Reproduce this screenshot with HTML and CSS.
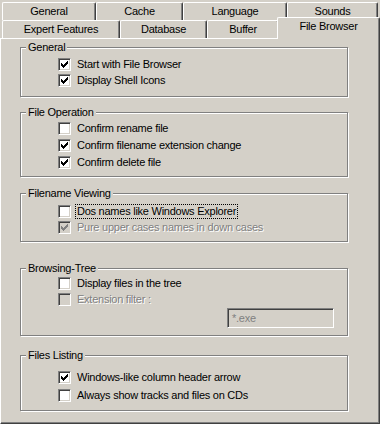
FILE: index.html
```html
<!DOCTYPE html>
<html>
<head>
<meta charset="utf-8">
<link rel="stylesheet" href="styles.css">
</head>
<body>
<div class="tabs">
  <div class="tabrow">
    <div class="tab w-general">General</div>
    <div class="tab w-cache">Cache</div>
    <div class="tab w-language">Language</div>
    <div class="tab w-sounds">Sounds</div>
  </div>
  <div class="tabrow">
    <div class="tab w-expert">Expert Features</div>
    <div class="tab w-database">Database</div>
    <div class="tab w-buffer">Buffer</div>
    <div class="tab tab-active w-filebrowser">File Browser</div>
  </div>
</div>
<div class="panel">
  <fieldset class="group g-general">
    <legend>General</legend>
    <div class="rows">
      <div class="row"><span class="cb"><svg width="11" height="11" viewBox="1 1 11 11"><path d="M3 5h1v3h-1z M4 6h1v3h-1z M5 7h1v3h-1z M6 6h1v3h-1z M7 5h1v3h-1z M8 4h1v3h-1z M9 3h1v3h-1z"/></svg></span><span class="lbl">Start with File Browser</span></div>
      <div class="row"><span class="cb"><svg width="11" height="11" viewBox="1 1 11 11"><path d="M3 5h1v3h-1z M4 6h1v3h-1z M5 7h1v3h-1z M6 6h1v3h-1z M7 5h1v3h-1z M8 4h1v3h-1z M9 3h1v3h-1z"/></svg></span><span class="lbl">Display Shell Icons</span></div>
    </div>
  </fieldset>
  <fieldset class="group g-fileop">
    <legend>File Operation</legend>
    <div class="rows">
      <div class="row"><span class="cb"></span><span class="lbl">Confirm rename file</span></div>
      <div class="row"><span class="cb"><svg width="11" height="11" viewBox="1 1 11 11"><path d="M3 5h1v3h-1z M4 6h1v3h-1z M5 7h1v3h-1z M6 6h1v3h-1z M7 5h1v3h-1z M8 4h1v3h-1z M9 3h1v3h-1z"/></svg></span><span class="lbl">Confirm filename extension change</span></div>
      <div class="row"><span class="cb"><svg width="11" height="11" viewBox="1 1 11 11"><path d="M3 5h1v3h-1z M4 6h1v3h-1z M5 7h1v3h-1z M6 6h1v3h-1z M7 5h1v3h-1z M8 4h1v3h-1z M9 3h1v3h-1z"/></svg></span><span class="lbl">Confirm delete file</span></div>
    </div>
  </fieldset>
  <fieldset class="group g-naming">
    <legend>Filename Viewing</legend>
    <div class="rows">
      <div class="row"><span class="cb"></span><span class="lbl lbl-focus">Dos names like Windows Explorer</span></div>
      <div class="row"><span class="cb cb-disabled"><svg width="11" height="11" viewBox="1 1 11 11"><path d="M3 5h1v3h-1z M4 6h1v3h-1z M5 7h1v3h-1z M6 6h1v3h-1z M7 5h1v3h-1z M8 4h1v3h-1z M9 3h1v3h-1z"/></svg></span><span class="lbl lbl-disabled">Pure upper cases names in down cases</span></div>
    </div>
  </fieldset>
  <fieldset class="group g-tree">
    <legend>Browsing-Tree</legend>
    <div class="rows">
      <div class="row"><span class="cb"></span><span class="lbl">Display files in the tree</span></div>
      <div class="row"><span class="cb cb-disabled"></span><span class="lbl lbl-disabled">Extension filter :</span></div>
      <div class="inputrow"><div class="textbox">*.exe</div></div>
    </div>
  </fieldset>
  <fieldset class="group g-listing">
    <legend>Files Listing</legend>
    <div class="rows">
      <div class="row row-tall"><span class="cb"><svg width="11" height="11" viewBox="1 1 11 11"><path d="M3 5h1v3h-1z M4 6h1v3h-1z M5 7h1v3h-1z M6 6h1v3h-1z M7 5h1v3h-1z M8 4h1v3h-1z M9 3h1v3h-1z"/></svg></span><span class="lbl">Windows-like column header arrow</span></div>
      <div class="row row-tall"><span class="cb"></span><span class="lbl">Always show tracks and files on CDs</span></div>
    </div>
  </fieldset>
</div>
</body>
</html>
```
FILE: styles.css
```css
html, body {
  margin: 0;
  padding: 0;
}
body {
  width: 380px;
  height: 424px;
  overflow: hidden;
  background: #d4d0c8;
  color: #000;
  font-family: "Liberation Sans", Arial, sans-serif;
  font-size: 11px;
  line-height: 13px;
  letter-spacing: -0.25px;
}
.tabs {
  padding-top: 2px;
}
.tabrow {
  display: flex;
  height: 18px;
  padding-left: 2px;
}
.tab {
  box-sizing: border-box;
  height: 18px;
  border-top: 1px solid #fff;
  border-left: 1px solid #fff;
  border-right: 1px solid #404040;
  box-shadow: inset -1px 0 #808080;
  border-top-left-radius: 2px;
  border-top-right-radius: 2px;
  display: flex;
  align-items: center;
  justify-content: center;
  padding-bottom: 1px;
  background: #d4d0c8;
  flex: none;
}
.w-general { width: 94px; }
.w-cache { width: 87px; }
.w-language { width: 104px; }
.w-sounds { width: 91px; }
.w-expert { width: 118px; }
.w-database { width: 87px; }
.w-buffer { width: 72px; }
.w-filebrowser { width: 103px; }
.tab-active {
  height: 22px;
  margin-top: -3px;
  margin-left: -2px;
  position: relative;
  z-index: 1;
  padding-bottom: 5px;
}
.panel {
  box-sizing: border-box;
  height: 386px;
  border-top: 1px solid #fff;
  border-left: 1px solid #fff;
  border-right: 1px solid #404040;
  border-bottom: 1px solid #404040;
  box-shadow: inset -1px -1px #808080;
  padding: 2px 0 0 19px;
}
.group {
  box-sizing: border-box;
  width: 328px;
  margin: 0;
  padding: 0;
  border: 1px solid #808080;
  box-shadow: inset 1px 1px #fff, 1px 1px #fff;
  min-inline-size: 0;
}
.group legend {
  margin-left: 5px;
  padding: 0 2px;
  line-height: 13px;
  background: #d4d0c8;
}
.rows {
  padding-left: 37px;
}
.row {
  display: flex;
  align-items: center;
  height: 16px;
}
.row-tall {
  height: 18px;
}
.g-general .rows { padding-top: 2px; padding-bottom: 8px; }
.g-fileop { margin-top: 9px; }
.g-fileop .row { height: 17px; }
.g-fileop .rows { padding-top: 1px; padding-bottom: 5px; }
.g-naming { margin-top: 10px; }
.g-naming .rows { padding-top: 3px; padding-bottom: 6px; }
.g-tree { margin-top: 20px; }
.g-tree .rows { padding-top: 0; padding-bottom: 7px; }
.g-listing { margin-top: 13px; }
.g-listing .rows { padding-top: 6px; padding-bottom: 6px; }
.cb {
  box-sizing: border-box;
  width: 13px;
  height: 13px;
  flex: none;
  background: #fff;
  border-top: 1px solid #808080;
  border-left: 1px solid #808080;
  border-bottom: 1px solid #fff;
  border-right: 1px solid #fff;
  box-shadow: inset 1px 1px #404040, inset -1px -1px #d4d0c8;
}
.cb svg {
  display: block;
  shape-rendering: crispEdges;
  fill: #000;
}
.cb-disabled {
  background: #d4d0c8;
}
.cb-disabled svg {
  fill: #808080;
}
.lbl {
  margin-left: 6px;
  white-space: nowrap;
}
.lbl-focus {
  margin-left: 4px;
  padding: 0 1px;
  border: 1px dotted #000;
}
.lbl-disabled {
  color: #808080;
  text-shadow: 1px 1px #fff;
}
.inputrow {
  display: flex;
  justify-content: flex-end;
  padding-right: 13px;
  margin-top: 1px;
}
.textbox {
  box-sizing: border-box;
  width: 107px;
  height: 20px;
  border-top: 1px solid #808080;
  border-left: 1px solid #808080;
  border-bottom: 1px solid #fff;
  border-right: 1px solid #fff;
  box-shadow: inset 1px 1px #404040, inset -1px -1px #d4d0c8;
  background: #d4d0c8;
  color: #808080;
  padding: 3px 0 0 4px;
}
```
